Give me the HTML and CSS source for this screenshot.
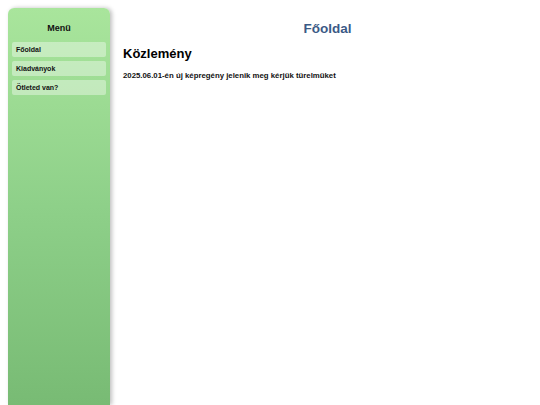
FILE: index.html
```html
<!DOCTYPE html>
<html lang="hu">
<head>
<meta charset="utf-8">
<title>Főoldal</title>
<link rel="stylesheet" href="styles.css">
</head>
<body>
<div class="layout">
  <nav class="sidebar">
    <h2 class="menu-title">Menü</h2>
    <ul class="menu">
      <li class="menu-item">Főoldal</li>
      <li class="menu-item">Kiadványok</li>
      <li class="menu-item">Ötleted van?</li>
    </ul>
  </nav>
  <main class="content">
    <h1 class="page-title">Főoldal</h1>
    <h2 class="section-title">Közlemény</h2>
    <p class="notice">2025.06.01-én új képregény jelenik meg kérjük türelmüket</p>
  </main>
</div>
</body>
</html>
```
FILE: styles.css
```css
html, body {
  margin: 0;
  padding: 0;
  background: #ffffff;
  font-family: "Liberation Sans", Arial, sans-serif;
  overflow: hidden;
}
.layout {
  display: flex;
  box-sizing: border-box;
  padding: 8px 8px 0 8px;
  gap: 13px;
  height: 100vh;
}
.sidebar {
  width: 94px;
  flex-shrink: 0;
  padding: 14px 4px 0 4px;
  background: linear-gradient(to bottom, #a9e59c 0%, #8ed089 50%, #78bb74 100%);
  border-radius: 6px 6px 0 0;
  box-shadow: 2px 0 4px rgba(0,0,0,0.25);
}
.menu-title {
  margin: 0 0 8px 0;
  font-size: 9px;
  font-weight: bold;
  text-align: center;
  color: #111;
  line-height: 12px;
}
.menu {
  list-style: none;
  margin: 0;
  padding: 0;
  display: flex;
  flex-direction: column;
  gap: 4px;
}
.menu-item {
  height: 15px;
  line-height: 15px;
  padding: 0 4px;
  font-size: 7px;
  font-weight: bold;
  color: #111;
  background: rgba(255,255,255,0.38);
  border-radius: 2px;
}
.content {
  flex: 1;
  padding-top: 13px;
}
.page-title {
  margin: 0 0 9px 0;
  text-align: center;
  font-size: 13.5px;
  line-height: 16px;
  color: #3b5a86;
}
.section-title {
  margin: 0 0 9px 0;
  font-size: 13px;
  line-height: 16px;
  color: #000;
}
.notice {
  margin: 0;
  font-size: 7.8px;
  font-weight: bold;
  color: #111;
}
```
